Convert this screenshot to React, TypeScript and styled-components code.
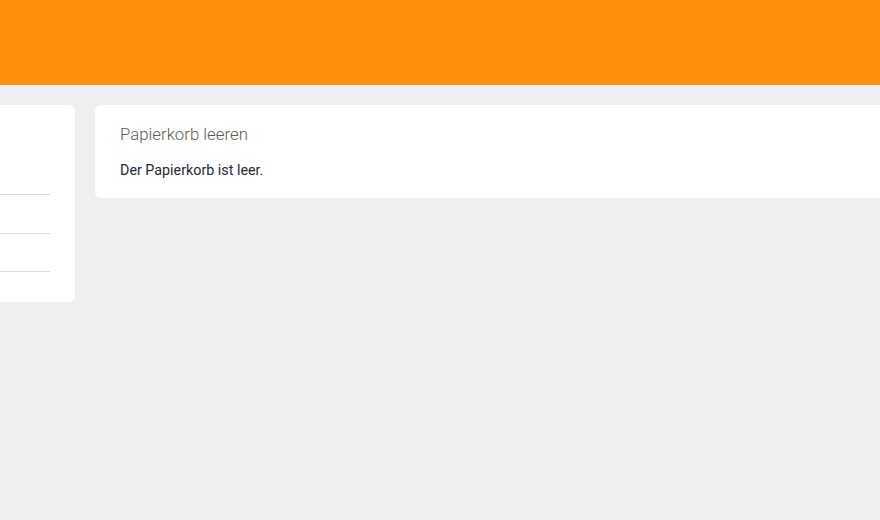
import React from 'react';
import styled, { createGlobalStyle } from 'styled-components';

const GlobalStyle = createGlobalStyle`
  html, body {
    margin: 0;
    padding: 0;
    background: #efeff1;
  }
  body {
    font-family: Roboto, "Liberation Sans", sans-serif;
  }
`;

const Page = styled.div`
  width: 880px;
  height: 520px;
  overflow: hidden;
`;

const TopBar = styled.header`
  height: 85px;
  background: #ff8f0d;
`;

// sidebar is scrolled partly off the left edge
const Layout = styled.div`
  display: grid;
  grid-template-columns: 200px 1000px;
  gap: 20px;
  align-items: start;
  margin-left: -125px;
  padding-top: 20px;
`;

const Card = styled.section`
  background: #ffffff;
  border-radius: 6px;
`;

const Sidebar = styled(Card)`
  padding: 0 25px;
  height: 197px;
`;

const SideHead = styled.div`
  height: 89px;
  border-bottom: 1px solid #dcdcdc;
`;

const SideItem = styled.div<{ $h: number; $last?: boolean }>`
  height: ${p => p.$h}px;
  border-bottom: ${p => (p.$last ? 'none' : '1px solid #dcdcdc')};
`;

const Content = styled(Card)`
  padding: 18px 25px 20px;
  height: 93px;
  box-sizing: border-box;
`;

const Title = styled.h2`
  margin: 0;
  font-size: 16.8px;
  font-weight: 300;
  color: #5c5c5c;
  line-height: 22px;
`;

const Message = styled.p`
  margin: 15px 0 0;
  font-size: 14.3px;
  font-weight: 400;
  color: #1f2937;
  line-height: 20px;
`;

export default function App() {
  return (
    <Page>
      <GlobalStyle />
      <TopBar />
      <Layout>
        <Sidebar>
          <SideHead />
          <SideItem $h={38} />
          <SideItem $h={37} />
          <SideItem $h={29} $last />
        </Sidebar>
        <Content>
          <Title>Papierkorb leeren</Title>
          <Message>Der Papierkorb ist leer.</Message>
        </Content>
      </Layout>
    </Page>
  );
}
